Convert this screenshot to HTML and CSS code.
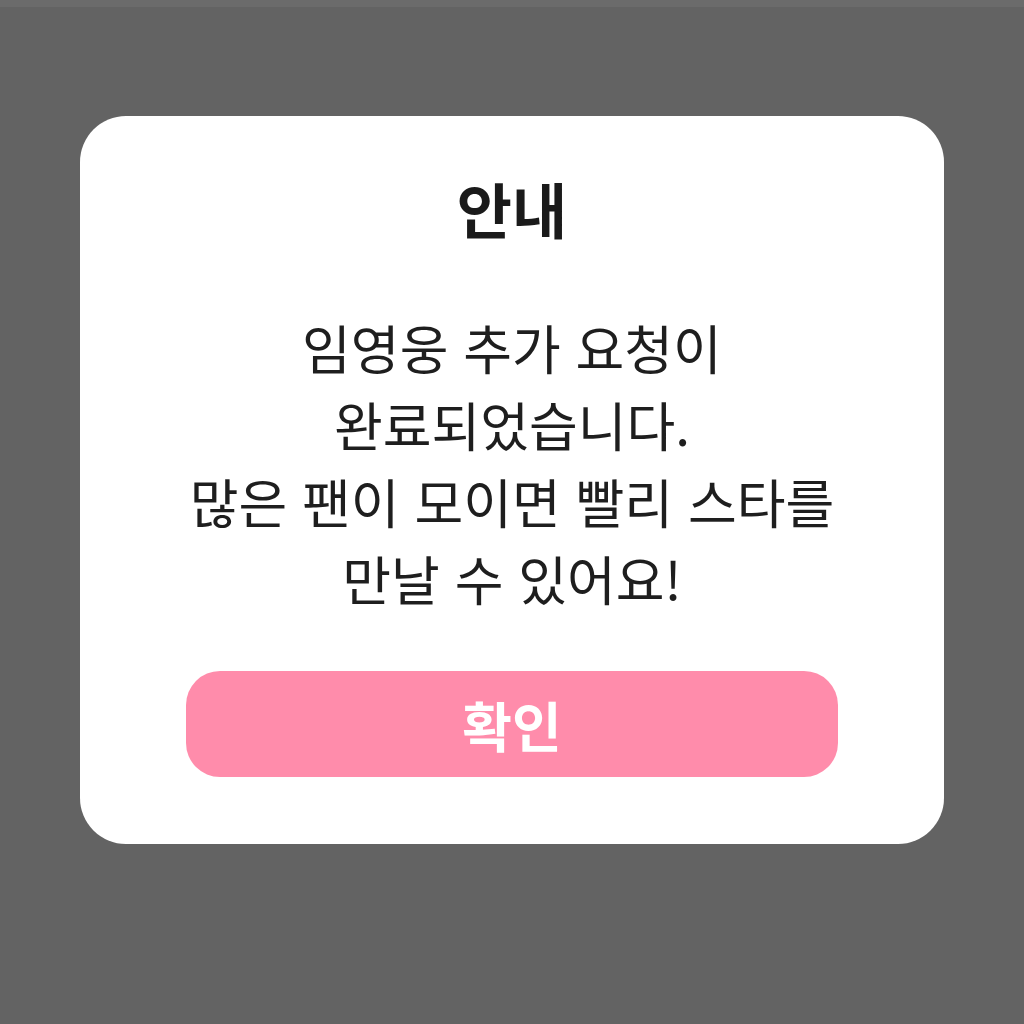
FILE: index.html
```html
<!DOCTYPE html>
<html lang="ko">
<head>
  <meta charset="UTF-8">
  <meta name="viewport" content="width=device-width, initial-scale=1.0">
  <title>안내</title>
  <link rel="stylesheet" href="styles.css">
</head>
<body>

<div class="status-strip"></div>
<div class="screen">
  <div class="dialog">
    <h1 class="dialog__title">안내</h1>
    <p class="dialog__message">
      임영웅 추가 요청이<br>
      완료되었습니다.<br>
      많은 팬이 모이면 빨리 스타를<br>
      만날 수 있어요!
    </p>
    <button class="dialog__button">확인</button>
  </div>
</div>

</body>
</html>
```

FILE: styles.css
```css
html, body {
  margin: 0;
  padding: 0;
}
*, *:before, *:after {
  box-sizing: border-box;
}
body {
  background-color: #636363;
  font-family: "Noto Sans CJK KR", "Noto Sans", sans-serif;
  height: 1024px;
  overflow: hidden;
}
.status-strip {
  height: 7px;
  background-color: #6b6b6b;
}
.screen {
  display: flex;
  justify-content: center;
  padding-top: 109px;
}
.dialog {
  width: 864px;
  height: 728px;
  background-color: #ffffff;
  border-radius: 46px;
  display: flex;
  flex-direction: column;
  align-items: center;
  padding: 56px 106px 0;
}
.dialog__title {
  margin: 0;
  font-size: 60px;
  font-weight: 700;
  line-height: 72px;
  color: #1a1a1a;
}
.dialog__message {
  margin: 65px 0 0;
  font-size: 53px;
  line-height: 77px;
  text-align: center;
  white-space: nowrap;
  color: #1e1e1e;
}
.dialog__button {
  margin-top: 54px;
  width: 652px;
  height: 106px;
  flex-shrink: 0;
  border: none;
  border-radius: 34px;
  background-color: #ff8cab;
  color: #ffffff;
  font-family: inherit;
  font-size: 54px;
  font-weight: 700;
}
```
